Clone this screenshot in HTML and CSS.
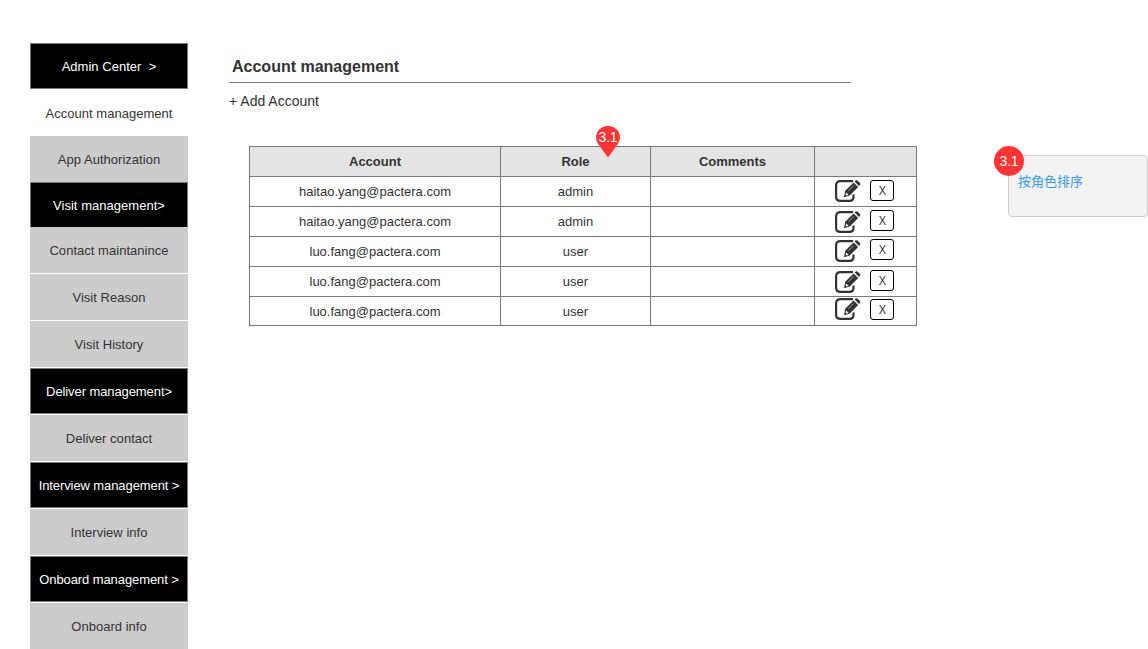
FILE: index.html
```
<!DOCTYPE html>
<html lang="en">
<head>
<meta charset="utf-8">
<title>Account management</title>
<link rel="stylesheet" href="styles.css">
</head>
<body>
<svg width="0" height="0" class="defs">
  <symbol id="edit" viewBox="0 0 26 23">
    <path d="M18 1.100H5.500Q1.100 1.100 1.100 5.500V17Q1.100 20.900 5.500 20.900H14.500Q18.500 20.900 18.500 17V14.500" fill="none" stroke="#333" stroke-width="2.200"/>
    <path d="M9 17.200L10.200 10.800L18.600 2.400L23.200 7L14.800 15.500Z" fill="#333"/>
    <path d="M19.600 1.500L20.700 .5Q21.500 -.2 22.400 .6L25 3Q25.700 3.800 25 4.700L24 6Z" fill="#333"/>
    <path d="M11.100 12.500L13.600 15L11.500 15.500L10.600 14.600Z" fill="#fff"/>
    <path d="M13.500 10.700L18.700 5.500" stroke="#bbb" stroke-width=".8"/>
  </symbol>
</svg>
<div class="page">
  <nav class="menu">
    <a class="item group">Admin Center&nbsp; &gt;</a>
    <a class="item current">Account management</a>
    <a class="item">App Authorization</a>
    <a class="item group joined">Visit management&gt;</a>
    <a class="item">Contact maintanince</a>
    <a class="item spaced">Visit Reason</a>
    <a class="item spaced">Visit History</a>
    <a class="item group tight spaced">Deliver management&gt;</a>
    <a class="item spaced">Deliver contact</a>
    <a class="item group tight spaced">Interview management &gt;</a>
    <a class="item spaced">Interview info</a>
    <a class="item group tight spaced">Onboard management &gt;</a>
    <a class="item spaced">Onboard info</a>
  </nav>
  <main class="content">
    <h1 class="title">Account management</h1>
    <a class="add">+ Add Account</a>
    <div class="grid">
      <div class="cell head">Account</div>
      <div class="cell head role">Role
        <svg class="pin" width="24" height="32" viewBox="0 0 24 32"><path d="M12 31.500L2.500 18.500Q0 15 0 11.500A12 11.500 0 0 1 24 11.500Q24 15 21.500 18.500Z" fill="#f33"/><text x="12" y="16" text-anchor="middle">3.1</text></svg>
      </div>
      <div class="cell head">Comments</div>
      <div class="cell head"></div>

      <div class="cell">haitao.yang@pactera.com</div><div class="cell">admin</div><div class="cell"></div>
      <div class="cell actions"><svg class="edit"><use href="#edit"/></svg><button class="remove"><span class="cross">X</span></button></div>
      <div class="cell">haitao.yang@pactera.com</div><div class="cell">admin</div><div class="cell"></div>
      <div class="cell actions low"><svg class="edit"><use href="#edit"/></svg><button class="remove"><span class="cross">X</span></button></div>
      <div class="cell">luo.fang@pactera.com</div><div class="cell">user</div><div class="cell"></div>
      <div class="cell actions high"><svg class="edit"><use href="#edit"/></svg><button class="remove"><span class="cross">X</span></button></div>
      <div class="cell">luo.fang@pactera.com</div><div class="cell">user</div><div class="cell"></div>
      <div class="cell actions low"><svg class="edit"><use href="#edit"/></svg><button class="remove"><span class="cross">X</span></button></div>
      <div class="cell">luo.fang@pactera.com</div><div class="cell">user</div><div class="cell"></div>
      <div class="cell actions last"><svg class="edit"><use href="#edit"/></svg><button class="remove"><span class="cross">X</span></button></div>
    </div>
  </main>
  <aside class="note">
    <span class="badge">3.1</span>
    <p class="note-text">按角色排序</p>
  </aside>
</div>
</body>
</html>
```
FILE: styles.css
```
* { box-sizing: border-box; }
body {
  margin: 0;
  background: #fff;
  color: #333;
  font: 13px/15px "Liberation Sans", "Noto Sans CJK SC", Arial, sans-serif;
}
.defs { position: absolute; }
.page { display: flex; height: 649px; overflow: hidden; }
.menu { width: 158px; margin: 43px 0 0 30px; flex: none; letter-spacing: .03px; }
.item {
  display: flex;
  align-items: center;
  justify-content: center;
  height: 46px;
  background: #ccc;
  white-space: nowrap;
}
.group { background: #000; color: #fff; border: 1px solid #797979; }
.tight { letter-spacing: -.09px; }
.current { height: 47px; background: #fff; padding-top: 1px; }
.joined { height: 45px; border-bottom: 0; }
.spaced { margin-top: 1px; }
.content { width: 688px; margin: 56px 0 0 41px; flex: none; }
.title {
  width: 622px;
  height: 27px;
  margin: 0;
  padding: 1px 0 0 3px;
  border-bottom: 1px solid #797979;
  font-size: 16px;
  line-height: 20px;
}
.add { display: block; margin: 10px 0 0; font-size: 14px; line-height: 16px; }
.grid {
  display: grid;
  grid-template-columns: 251px 150px 164px 102px;
  grid-template-rows: repeat(5, 30px) 29px;
  width: 668px;
  margin: 37px 0 0 20px;
  border: solid #797979;
  border-width: 1px 0 0 1px;
}
.cell {
  display: flex;
  align-items: center;
  justify-content: center;
  border: solid #797979;
  border-width: 0 1px 1px 0;
}
.head { background: #e4e4e4; font-weight: bold; }
.role { position: relative; }
.pin { position: absolute; left: 95px; top: -21px; }
.pin text { fill: #fff; font-size: 14px; font-weight: normal; letter-spacing: -.2px; }
.actions { align-items: flex-start; justify-content: flex-start; padding: 3px 0 0 20px; gap: 9px; }
.edit { width: 26px; height: 23px; flex: none; }
.remove {
  width: 24px;
  height: 21px;
  padding: 0;
  background: #fff;
  border: 1px solid #000;
  border-radius: 3px;
  color: #333;
  font: 13px/19px "Liberation Sans", sans-serif;
}
.cross { display: inline-block; transform: scaleX(.85); }
.low .edit { margin-top: 1px; }
.high { padding-top: 2px; }
.high .edit { margin-top: 1px; }
.last { padding-top: 1px; }
.last .remove { margin-top: 1px; }
.note {
  position: relative;
  width: 140px;
  height: 62px;
  margin: 155px 0 0 91px;
  padding: 17px 9px;
  flex: none;
  background: #f2f2f2;
  border: 1px solid #ccc;
  border-radius: 4px;
}
.note-text { margin: 0; color: #39f; font-size: 13px; line-height: 18px; }
.badge {
  position: absolute;
  left: -15px;
  top: -10px;
  width: 30px;
  height: 30px;
  border-radius: 50%;
  background: #f33;
  color: #fff;
  font-size: 14px;
  letter-spacing: -.2px;
  line-height: 30px;
  text-align: center;
}
```
